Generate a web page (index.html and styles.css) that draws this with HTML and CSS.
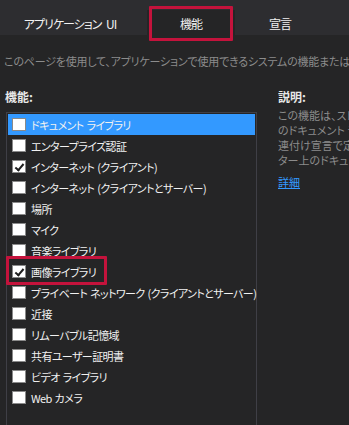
FILE: index.html
```html
<!DOCTYPE html>
<html lang="ja">
<head>
    <meta charset="UTF-8">
    <title>Package.appxmanifest</title>
    <link rel="stylesheet" href="styles.css">
</head>
<body>
    <div class="tabs">
        <div class="tab tab-app">アプリケーション UI</div>
        <div class="tab active">機能<span class="mark"></span></div>
        <div class="tab tab-decl">宣言</div>
    </div>

    <p class="intro">このページを使用して、アプリケーションで使用できるシステムの機能またはデバイスを指定します。</p>

    <div class="main">
        <div class="caps">
            <div class="label">機能:</div>
            <ul class="list">
                <li class="selected"><span class="box"></span>ドキュメント ライブラリ</li>
                <li><span class="box"></span>エンタープライズ認証</li>
                <li><span class="box checked"></span>インターネット (クライアント)</li>
                <li><span class="box"></span>インターネット (クライアントとサーバー)</li>
                <li><span class="box"></span>場所</li>
                <li><span class="box"></span>マイク</li>
                <li><span class="box"></span>音楽ライブラリ</li>
                <li><span class="box checked"></span>画像ライブラリ<span class="mark"></span></li>
                <li><span class="box"></span>プライベート ネットワーク (クライアントとサーバー)</li>
                <li><span class="box"></span>近接</li>
                <li><span class="box"></span>リムーバブル記憶域</li>
                <li><span class="box"></span>共有ユーザー証明書</li>
                <li><span class="box"></span>ビデオ ライブラリ</li>
                <li><span class="box"></span>Web カメラ</li>
            </ul>
        </div>

        <div class="desc">
            <div class="label">説明:</div>
            <p class="desc-text">この機能は、ストアアプリがユーザー<br>のドキュメント ライブラリへアクセス<br>連付け宣言で定義されたファイル<br>ター上のドキュメントを追加、変更</p>
            <a href="#" class="more">詳細</a>
        </div>
    </div>
</body>
</html>
```

FILE: styles.css
```css
* {
    margin: 0;
    padding: 0;
    box-sizing: border-box;
}

body {
    font-family: 'Noto Sans CJK JP', 'Noto Sans', sans-serif;
    font-feature-settings: "palt";
    font-size: 11px;
    background: #252526;
    color: #f1f1f1;
    width: 349px;
    height: 425px;
    overflow: hidden;
}

.tabs {
    display: flex;
    align-items: flex-end;
    height: 35px;
    padding-left: 10px;
    background: #2d2d30;
}

.tab {
    position: relative;
    height: 25px;
    line-height: 27px;
    text-align: center;
    color: #f1f1f1;
    font-size: 12px;
    letter-spacing: -1px;
    word-spacing: 3px;
}

.tab-app {
    width: 120px;
    margin-right: 17px;
}

.tab.active {
    width: 88px;
    background: #252526;
}

.tab-decl {
    width: 90px;
}

.mark {
    position: absolute;
    border: 3px solid #c4133c;
    border-radius: 1px;
}

.tab .mark {
    left: 2px;
    right: 2px;
    top: -4px;
    bottom: -6px;
}

.intro {
    margin: 17px 0 0 4px;
    white-space: nowrap;
    overflow: hidden;
    color: #8c8c8c;
    line-height: 18px;
    letter-spacing: -0.2px;
}

.main {
    display: flex;
    margin-top: 19px;
}

.caps {
    width: 251px;
    margin-left: 6px;
    flex-shrink: 0;
}

.label {
    font-size: 12px;
    font-weight: bold;
    color: #e8e8e8;
    line-height: 16px;
    margin-left: -1px;
}

.list {
    list-style: none;
    margin-top: 7px;
    padding: 1px;
    height: 320px;
    border: 1px solid #3f3f46;
    border-bottom: none;
}

.list li {
    position: relative;
    display: flex;
    align-items: center;
    height: 21px;
    white-space: nowrap;
    letter-spacing: -0.6px;
    word-spacing: 1px;
}

.list li.selected {
    background: #3399ff;
}

.box {
    position: relative;
    width: 14px;
    height: 13px;
    margin: 0 5px 0 4px;
    background: #ffffff;
    border: 1px solid #8a8a8a;
    flex-shrink: 0;
}

.box.checked::after {
    content: "";
    position: absolute;
    left: 4px;
    top: 1px;
    width: 3px;
    height: 7px;
    border: solid #1e1e1e;
    border-width: 0 2px 2px 0;
    transform: rotate(40deg);
}

.list li .mark {
    left: -2px;
    top: -5px;
    width: 101px;
    height: 29px;
}

.desc {
    margin-left: 21px;
    white-space: nowrap;
    overflow: hidden;
}

.desc .label {
    margin-left: 0;
}

.desc-text {
    margin-top: 3px;
    color: #8c8c8c;
    line-height: 15px;
}

.more {
    display: inline-block;
    margin-top: 6px;
    color: #3399ff;
    text-decoration: underline;
}
```
